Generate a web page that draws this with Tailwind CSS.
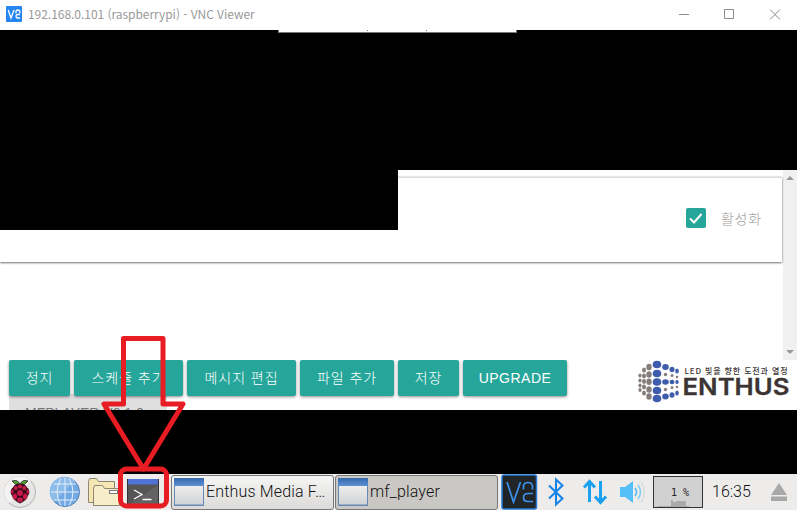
<!DOCTYPE html>
<html lang="ko">
<head>
<meta charset="utf-8">
<title>VNC Viewer</title>
<script src="https://cdn.jsdelivr.net/npm/@tailwindcss/browser@4"></script>
</head>
<body class="bg-white">
<div class="relative flex h-[510px] w-[797px] flex-col overflow-hidden bg-white font-['Liberation_Sans','Noto_Sans_CJK_KR',sans-serif]">
  <!-- Window title bar -->
  <header class="flex h-[30px] shrink-0 items-center pl-[6px] text-[#999]">
    <svg class="mt-[-2px] mr-[6px] h-4 w-4" viewBox="0 0 16 16" fill="none"><rect width="16" height="16" rx="1" fill="#2486ee"/><path d="M2.2 4 5 12 8 4M10 7.2V5.5Q10 4 11.8 4T13.8 5.5V7.2M14 8.5H11.5Q10 8.5 10 10.2T11.5 12H14" stroke="#fff" stroke-width="1.3"/></svg>
    <h1 class="mt-[-2px] flex-1 whitespace-nowrap font-['Noto_Sans_CJK_KR','Noto_Sans',sans-serif] text-[12px] leading-none tracking-[-0.04px]">192.168.0.101 (raspberrypi) - VNC Viewer</h1>
    <svg class="h-[30px] w-[121px]" viewBox="676 0 121 30" fill="none" stroke="#8d8d8d"><path d="M679 14.5h10M724.5 9.5h9v9h-9zM770 9.5l10 10M780 9.5l-10 10"/></svg>
  </header>

  <!-- Remote desktop browser page -->
  <div class="h-[140px] shrink-0 bg-black">
    <div class="ml-[278px] flex h-[3px] w-[239px] border-x border-b border-[#777] bg-white">
      <i class="ml-[88px] h-px w-px bg-[#777]"></i><i class="ml-[58px] h-px w-px bg-[#777]"></i>
    </div>
  </div>
  <main class="flex h-[190px] shrink-0">
    <section class="relative w-[783px] bg-white pt-[7px]">
      <div class="flex h-[85px] w-[782px] items-center justify-end border-t border-[#ddd] pr-[20px] shadow-[0_1px_2px_rgba(0,0,0,.5),0_0_2px_rgba(0,0,0,.2)]">
        <svg class="mt-[-5px] mr-[15px] h-[20px] w-[20px]" viewBox="0 0 20 20" fill="none"><rect width="20" height="20" rx="2" fill="#26a69a"/><path d="m4 10.5 4 4 7.5-8.5" stroke="#fff" stroke-width="2"/></svg>
        <label class="mt-[-4px] w-[41px] whitespace-nowrap font-['Noto_Sans_CJK_KR'] text-[14px] font-light leading-none tracking-[0.7px] text-[#a0a0a0]">활성화</label>
      </div>
      <div class="absolute top-0 left-0 h-[60px] w-[398px] bg-black"></div>
    </section>
    <div class="flex w-[14px] flex-col items-center justify-between bg-[#f0f0f0] py-[6px]">
      <svg class="h-1 w-2" viewBox="0 0 8 4" fill="#999"><path d="m0 4 4-4 4 4z"/></svg>
      <svg class="h-1 w-2" viewBox="0 0 8 4" fill="#999"><path d="m0 0 4 4 4-4z"/></svg>
    </div>
  </main>

  <section class="relative h-[50px] shrink-0 overflow-hidden pl-[9px]">
    <div class="absolute top-[34px] left-[9px] h-4 w-[158px] overflow-hidden bg-[#dfdfdf] pt-[12px] pl-[16px] text-[14px] leading-[15px] whitespace-nowrap text-[#777]">MFPLAYER V2.1.0</div>
    <nav class="relative flex gap-1 font-['Liberation_Sans','Noto_Sans_CJK_KR',sans-serif] text-[14px] font-light tracking-[0.95px] whitespace-nowrap text-white">
      <button class="h-9 w-[61px] rounded-[2px] bg-[#26a69a] shadow-[0_1px_3px_rgba(0,0,0,.45)]">정지</button>
      <button class="h-9 w-[109px] rounded-[2px] bg-[#26a69a] shadow-[0_1px_3px_rgba(0,0,0,.45)]">스케쥴 추가</button>
      <button class="h-9 w-[109px] rounded-[2px] bg-[#26a69a] shadow-[0_1px_3px_rgba(0,0,0,.45)]">메시지 편집</button>
      <button class="h-9 w-[94px] rounded-[2px] bg-[#26a69a] shadow-[0_1px_3px_rgba(0,0,0,.45)]">파일 추가</button>
      <button class="h-9 w-[61px] rounded-[2px] bg-[#26a69a] shadow-[0_1px_3px_rgba(0,0,0,.45)]">저장</button>
      <button class="h-9 w-[104px] rounded-[2px] bg-[#26a69a] text-[14px] tracking-[0.5px] shadow-[0_1px_3px_rgba(0,0,0,.45)]">UPGRADE</button>
      <!-- Company logo -->
      <svg class="ml-[65px] h-[50px] w-[161px]" viewBox="636 360 161 50">
        <g fill="#857d7a">
          <ellipse cx="640" cy="375.500" rx="1.600" ry="2"/><ellipse cx="640" cy="380.500" rx="1.600" ry="2"/><ellipse cx="640" cy="385.500" rx="1.600" ry="2"/><ellipse cx="640" cy="390" rx="1.600" ry="2"/>
          <ellipse cx="644" cy="370" rx="2" ry="2.600"/><ellipse cx="644" cy="376" rx="2" ry="2.400"/><ellipse cx="644" cy="381.500" rx="2" ry="2.400"/><ellipse cx="644" cy="387" rx="2" ry="2.400"/><ellipse cx="644" cy="393" rx="2" ry="2.600"/>
          <ellipse cx="649" cy="367" rx="2.700" ry="3.200"/><ellipse cx="649" cy="374.500" rx="2.700" ry="3.200"/><ellipse cx="649" cy="381.800" rx="2.700" ry="3.200"/><ellipse cx="649" cy="389.500" rx="2.700" ry="3.200"/><ellipse cx="649" cy="396.500" rx="2.700" ry="3.200"/>
          <circle cx="665.500" cy="374.500" r="1.700"/><circle cx="665.500" cy="389.500" r="1.700"/><circle cx="672" cy="375.500" r="1.500"/><circle cx="672" cy="387.500" r="1.500"/><circle cx="677" cy="377" r="1.300"/><circle cx="677" cy="387" r="1.300"/>
        </g>
        <g fill="#3e5bac">
          <ellipse cx="657" cy="364.500" rx="4.300" ry="3.800"/><ellipse cx="657" cy="373.500" rx="4.300" ry="3.800"/><ellipse cx="657" cy="382" rx="4.300" ry="3.800"/><ellipse cx="657" cy="390.500" rx="4.300" ry="3.800"/><ellipse cx="657" cy="398.500" rx="4.300" ry="3.800"/>
          <ellipse cx="665.500" cy="367" rx="3.300" ry="3"/><ellipse cx="665.500" cy="382" rx="3.300" ry="2.800"/><ellipse cx="665.500" cy="396.500" rx="3.300" ry="3"/>
          <ellipse cx="672" cy="369.500" rx="2.500" ry="2.700"/><ellipse cx="672" cy="382" rx="2.400" ry="2.300"/><ellipse cx="672" cy="395" rx="2.500" ry="2.700"/>
          <ellipse cx="677" cy="371" rx="1.800" ry="2.500"/><ellipse cx="677" cy="382" rx="1.700" ry="2"/><ellipse cx="677" cy="393" rx="1.800" ry="2.500"/>
        </g>
        <text x="684.500" y="374.200" textLength="103" font-family="Noto Sans CJK KR" font-size="8" font-weight="500" letter-spacing="0" fill="#3b3433">LED 빛을 향한 도전과 열정</text>
        <text x="682.500" y="394.800" textLength="107" lengthAdjust="spacingAndGlyphs" font-family="Inter" font-size="23" font-weight="600" letter-spacing="0" fill="#3b3433" stroke="#3b3433" stroke-width=".3">ENTHUS</text>
      </svg>
    </nav>
  </section>
  <div class="h-[64px] shrink-0 bg-black"></div>

  <!-- Taskbar -->
  <footer class="flex h-9 shrink-0 items-center bg-[#edeceb] font-[Roboto,sans-serif] text-[16px] font-light text-[#111]">
    <svg class="h-9 w-[171px] shrink-0" viewBox="0 474 171 36" fill="none">
      <circle cx="20" cy="492" r="15.500" fill="#e6e6e6" stroke="#b2b2b2"/>
      <path d="M9 481A15 15 0 0 0 9 503L31 481A15 15 0 0 0 9 481" fill="#f3f3f3"/>
      <path d="M20 484.500q-5 1-8-3.500 6-2 8 3.500 2-5.500 8-3.500-3 4.500-8 3.500Z" fill="#55a630" stroke="#222" stroke-width=".8"/>
      <path d="M20 484c3-1 6 1 7 3.500 3 2 3 6 1 8-1 4-4 6-8 8-4-2-7-4-8-8-2-2-2-6 1-8 1-2.500 4-4.500 7-3.500Z" fill="#3c0c1b"/>
      <g fill="#c51a4a"><circle cx="20" cy="486.500" r="2.100"/><circle cx="15.800" cy="488" r="2"/><circle cx="24.200" cy="488" r="2"/><circle cx="20" cy="493" r="2.900"/><ellipse cx="14.800" cy="496.500" rx="2.200" ry="3"/><ellipse cx="25.200" cy="496.500" rx="2.200" ry="3"/><ellipse cx="20" cy="499.800" rx="2.900" ry="2.300"/><ellipse cx="12.300" cy="491.500" rx="1.200" ry="2.300"/><ellipse cx="27.700" cy="491.500" rx="1.200" ry="2.300"/></g>
      <circle cx="65" cy="492" r="14.500" fill="#73a9e3" stroke="#4d7fb8"/>
      <path d="M54 502A14 14 0 0 1 75 481Z" fill="#8dbbea"/>
      <path d="M65 478v28M51 492h28M54 484h22M54 500h22M61 478.500q-8 13.500 0 27M69 478.500q8 13.500 0 27" stroke="#e5effa"/>
      <path d="M88.500 502.500v-21l1-3h7l2 3h16v21z" fill="#f5e6b3" stroke="#8d8671"/>
      <path d="M93.500 505.500v-17l1-3h8l2 3h15v17z" fill="#f8edc9" stroke="#8d8671"/>
      <rect x="109.500" y="490.500" width="8" height="3" fill="#fff" stroke="#777"/>
      <rect x="127" y="479" width="32" height="27" fill="#555"/><path d="M127 506 159 484v22z" fill="#626262"/><rect x="127" y="479" width="32" height="5.500" fill="#4f72d4"/><path d="M127.500 479v27M158.500 479v27" stroke="#333"/>
      <path d="m134 490 8 4.500-8 4.500M142.500 499.500h9" stroke="#fff" stroke-width="1.300"/>
    </svg>
    <div class="flex h-[35px] w-[163px] shrink-0 items-center rounded-[3px] border border-[#777] bg-linear-to-b from-[#f5f5f4] to-[#dcdbd9] pl-[2px]">
      <svg class="mr-[2px] h-7 w-[30px] shrink-0" viewBox="0 0 30 28"><defs><linearGradient id="wb" x2="0" y2="1"><stop stop-color="#3569ad"/><stop offset="1" stop-color="#5e91d3"/></linearGradient><linearGradient id="wg" x2="0" y2="1"><stop stop-color="#ededed"/><stop offset="1" stop-color="#d2d3d5"/></linearGradient></defs><rect width="30" height="28" fill="#6689b4"/><rect width="30" height="8" fill="url(#wb)"/><rect x="1" y="8" width="28" height="18.500" fill="url(#wg)"/></svg>
      <span class="whitespace-nowrap tracking-[0.16px]">Enthus Media F…</span>
    </div>
    <div class="ml-px flex h-[35px] w-[163px] shrink-0 items-center rounded-[3px] border border-[#777] bg-[#cac8c4] pl-[2px]">
      <svg class="mr-[2px] h-7 w-[30px] shrink-0" viewBox="0 0 30 28"><rect width="30" height="28" fill="#6689b4"/><rect width="30" height="8" fill="url(#wb)"/><rect x="1" y="8" width="28" height="18.500" fill="url(#wg)"/></svg>
      <span class="tracking-[0.16px]">mf_player</span>
    </div>
    <svg class="h-9 w-[155px] shrink-0" viewBox="498 474 155 36" fill="none">
      <rect x="502" y="475" width="34.500" height="34" rx="2" fill="#222527" stroke="#257bd5" stroke-width="1.500"/>
      <path d="m507 482 6.500 20 7-20M523.500 489.500v-3q0-4 4.500-4t4.500 4v3M533 493.500h-5q-4.500 0-4.500 4t4.500 4h5" stroke="#3d91ed" stroke-width="1.700"/>
      <path d="m549 485.500 13.500 13-6.500 6v-25l6.500 6-13.500 13" stroke="#1582e8" stroke-width="2"/>
      <path d="M589.500 502v-20M584 487.500l5.500-6 5.500 6M600.500 481v20M595 496.500l5.500 6 5.500-6" stroke="#1ca1f0" stroke-width="3"/>
      <path d="M620 487h5l8-6v22l-8-6h-5z" fill="#55bff7"/>
      <path d="M635 488q3 4 0 8" stroke="#55bff7" stroke-width="1.700"/><path d="M638 485q5 7 0 14" stroke="#83cff5" stroke-width="1.700"/><path d="M641 482q7 10 0 20" stroke="#d6dee2" stroke-width="1.700"/>
    </svg>
    <div class="relative h-8 w-[50px] shrink-0 border border-[#333] bg-[#d1d1d1]">
      <svg class="absolute inset-0 h-[30px] w-12" viewBox="0 0 48 30" fill="#aaa"><path d="M3 30v-1h14v-6h2v2h3v-1h10v5h3v1z"/></svg>
      <span class="absolute top-[9px] left-[17px] font-['DejaVu_Sans_Mono',monospace] text-[10px] leading-[14px] font-normal whitespace-pre text-[#222]">1 %</span>
    </div>
    <time class="ml-[9px] w-[59px]">16:35</time>
    <svg class="h-[18px] w-4" viewBox="0 0 16 18" fill="#a8a8a8"><path d="m8 0 8 12H0zM0 13.500h16V18H0z"/></svg>
  </footer>

  <!-- Callout pointing at the terminal launcher -->
  <svg class="absolute inset-0 h-[510px] w-[797px]" viewBox="0 0 797 510" fill="none" stroke="#e81c23" stroke-width="5" stroke-linejoin="round">
    <path d="M123.500 338.500h39.500v65.500h20L143.500 469 104 404h19.500z"/>
    <rect x="120.500" y="469" width="46" height="37" rx="6"/>
  </svg>
</div>
</body>
</html>
